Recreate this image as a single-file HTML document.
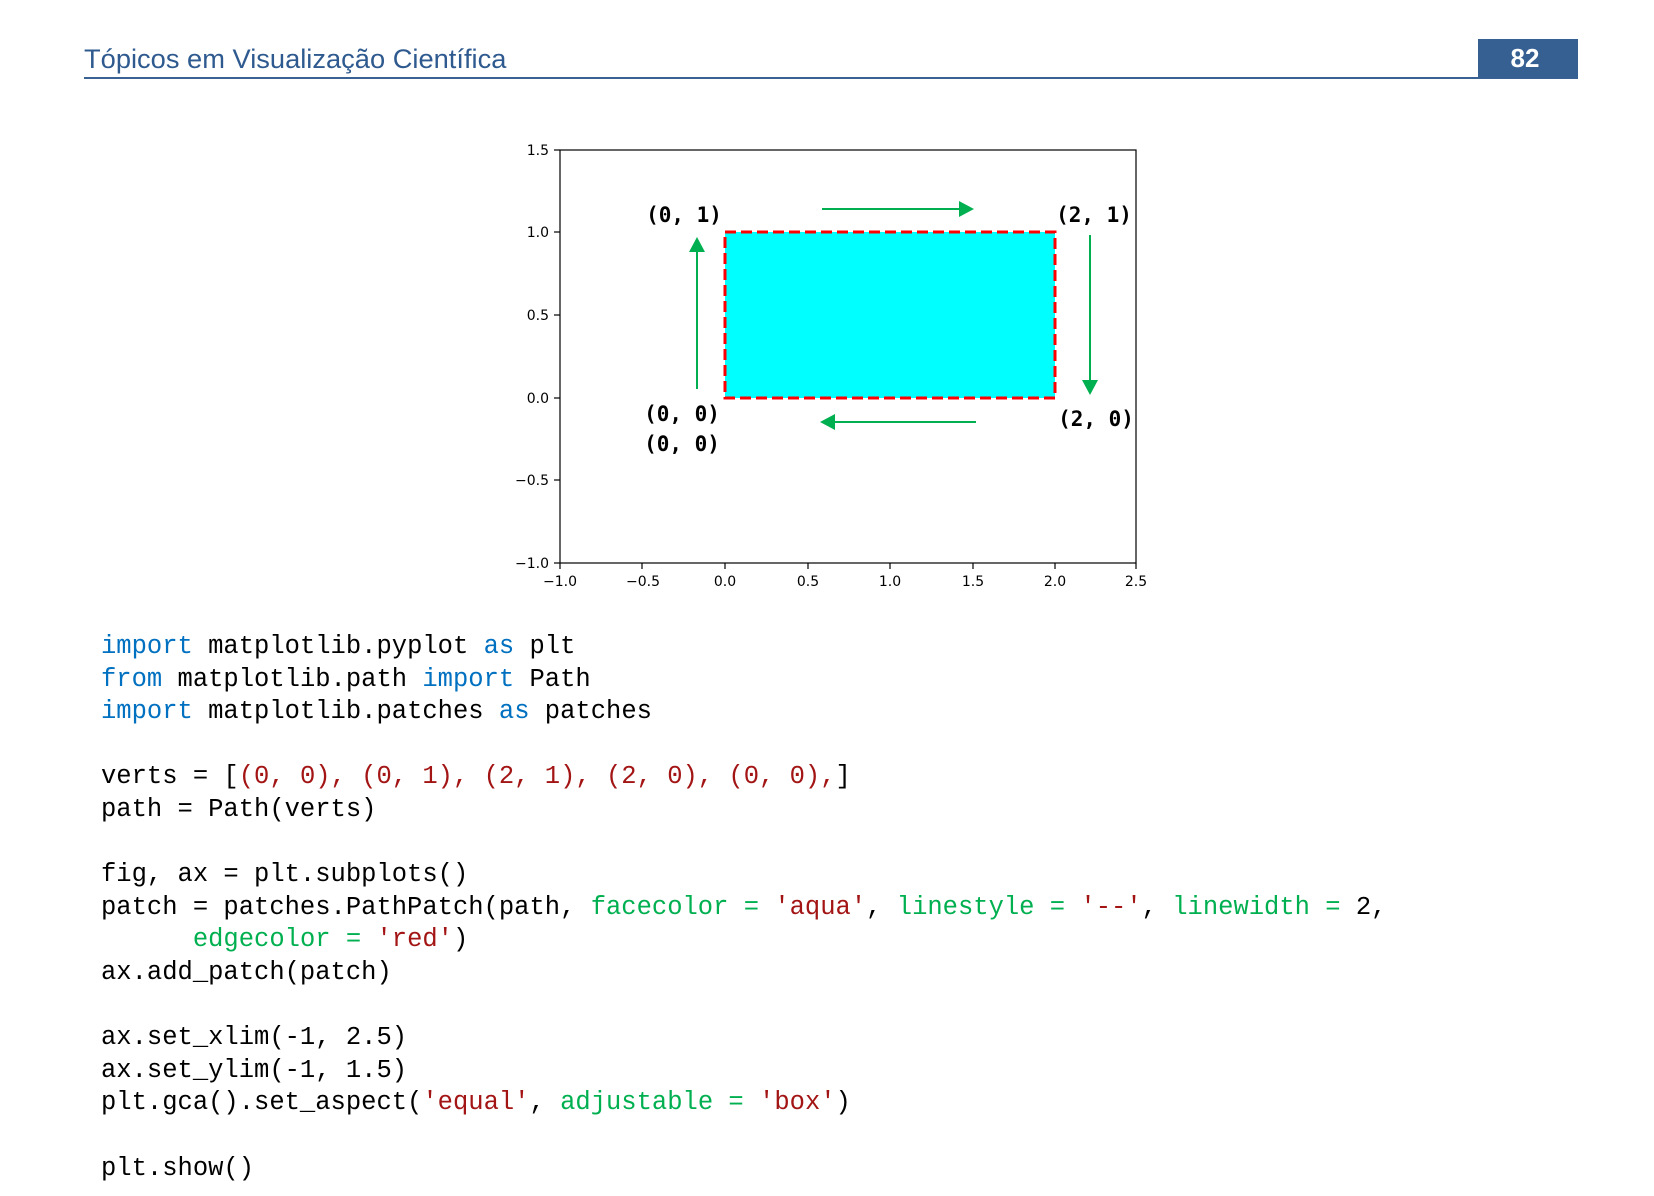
<!DOCTYPE html>
<html><head><meta charset="utf-8"><style>
html,body{margin:0;padding:0;background:#fff;width:1654px;height:1196px;overflow:hidden;position:relative}
.hdr{position:absolute;left:84px;top:44px;font-family:"Liberation Sans",sans-serif;font-size:27px;color:#2f5a8f;white-space:nowrap;transform-origin:0 0;transform:scaleX(1.01)}
.line{position:absolute;left:84px;top:77px;width:1494px;height:2px;background:#3a6194}
.pg{position:absolute;left:1478px;top:39px;width:94px;height:39px;padding-right:6px;background:#366092;color:#fff;font-family:"Liberation Sans",sans-serif;font-weight:bold;font-size:26px;text-align:center;line-height:39px}
pre{position:absolute;left:101px;top:631px;margin:0;font-family:"Liberation Mono",monospace;font-size:25.5px;line-height:32.6px;color:#000}
.k{color:#0070c0}.s{color:#a31515}.g{color:#00b050}
</style></head><body>
<div class="hdr">Tópicos em Visualização Científica</div>
<div class="line"></div>
<div class="pg">82</div>
<svg width="1654" height="1196" style="position:absolute;left:0;top:0">
<g transform="translate(-3,0)">
<rect x="728" y="232" width="330" height="166" fill="#00ffff" stroke="#ff0000" stroke-width="3" stroke-dasharray="11,5"/>
<rect x="563" y="150" width="576" height="413" fill="none" stroke="#000" stroke-width="1.2"/>
<g stroke="#000" stroke-width="1.2">
<line x1="563" y1="563" x2="563" y2="569"/><line x1="728" y1="563" x2="728" y2="569"/><line x1="893" y1="563" x2="893" y2="569"/><line x1="1058" y1="563" x2="1058" y2="569"/><line x1="976" y1="563" x2="976" y2="569"/><line x1="811" y1="563" x2="811" y2="569"/><line x1="645" y1="563" x2="645" y2="569"/><line x1="1139" y1="563" x2="1139" y2="569"/>
<line x1="557" y1="150" x2="563" y2="150"/><line x1="557" y1="232" x2="563" y2="232"/><line x1="557" y1="315" x2="563" y2="315"/><line x1="557" y1="398" x2="563" y2="398"/><line x1="557" y1="480" x2="563" y2="480"/><line x1="557" y1="563" x2="563" y2="563"/>
</g>
<g font-family="DejaVu Sans,sans-serif" font-size="14" fill="#000" text-anchor="end">
<text x="552" y="155">1.5</text><text x="552" y="237">1.0</text><text x="552" y="320">0.5</text><text x="552" y="403">0.0</text><text x="552" y="485">−0.5</text><text x="552" y="568">−1.0</text>
</g>
<g font-family="DejaVu Sans,sans-serif" font-size="14" fill="#000" text-anchor="middle">
<text x="563" y="586">−1.0</text><text x="646" y="586">−0.5</text><text x="728" y="586">0.0</text><text x="811" y="586">0.5</text><text x="893" y="586">1.0</text><text x="976" y="586">1.5</text><text x="1058" y="586">2.0</text><text x="1139" y="586">2.5</text>
</g>
<g font-family="DejaVu Sans Mono,monospace" font-size="21" font-weight="bold" fill="#000" text-anchor="middle">
<text x="687" y="222">(0, 1)</text><text x="1097" y="222">(2, 1)</text><text x="685" y="421">(0, 0)</text><text x="685" y="451">(0, 0)</text><text x="1099" y="426">(2, 0)</text>
</g>
<g stroke="#00b050" stroke-width="2" fill="#00b050">
<line x1="825" y1="209" x2="962" y2="209"/><polygon points="962,201 977,209 962,217" stroke="none"/>
<line x1="1093" y1="235" x2="1093" y2="380"/><polygon points="1085,380 1101,380 1093,395" stroke="none"/>
<line x1="979" y1="422" x2="838" y2="422"/><polygon points="838,414 823,422 838,430" stroke="none"/>
<line x1="700" y1="389" x2="700" y2="252"/><polygon points="692,252 708,252 700,237" stroke="none"/>
</g>
</g>
</svg>
<pre><span class="k">import</span> matplotlib.pyplot <span class="k">as</span> plt
<span class="k">from</span> matplotlib.path <span class="k">import</span> Path
<span class="k">import</span> matplotlib.patches <span class="k">as</span> patches

verts = [<span class="s">(0, 0), (0, 1), (2, 1), (2, 0), (0, 0),</span>]
path = Path(verts)

fig, ax = plt.subplots()
patch = patches.PathPatch(path, <span class="g">facecolor = </span><span class="s">'aqua'</span>, <span class="g">linestyle = </span><span class="s">'--'</span>, <span class="g">linewidth = </span>2,
      <span class="g">edgecolor = </span><span class="s">'red'</span>)
ax.add_patch(patch)

ax.set_xlim(-1, 2.5)
ax.set_ylim(-1, 1.5)
plt.gca().set_aspect(<span class="s">'equal'</span>, <span class="g">adjustable = </span><span class="s">'box'</span>)

plt.show()</pre>
</body></html>
